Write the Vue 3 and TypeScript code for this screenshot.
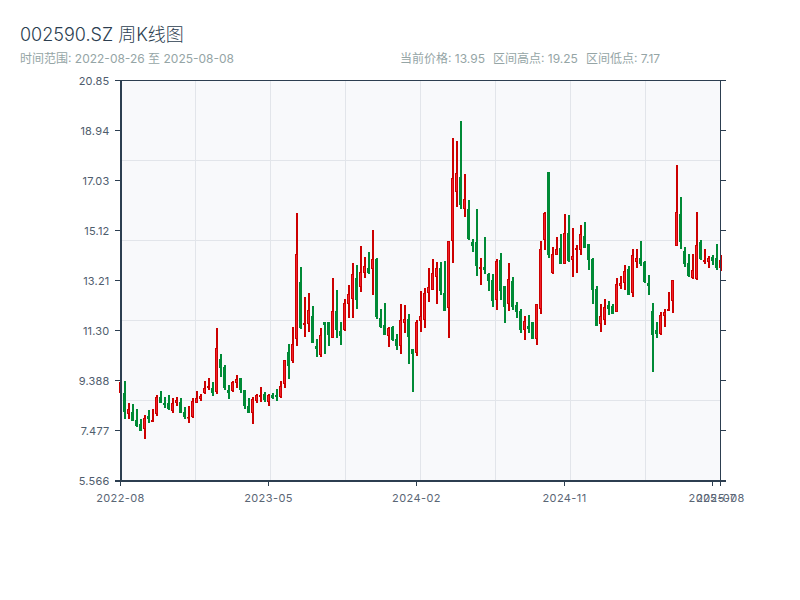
<script setup lang="ts">
type Row = [number, number, number, number, number]

// Each row: wick top, wick bottom, body top, body bottom (read at 3x scale), 1 = rising
const partA: Row[] = [
  [185,218,185,218,1],[183,296,220,276,0],[250,298,268,282,1],[252,303,276,303,0],[267,320,300,318,0],
  [297,332,312,332,0],[285,357,295,328,1],[270,308,288,298,0],[267,305,300,305,1],[226,288,232,283,1],
  [213,249,232,249,0],[232,263,248,255,0],[226,270,250,268,0],[235,279,250,272,1],[232,258,240,248,1],
  [235,278,247,278,0],[262,298,275,290,0],[258,308,290,293,1],[235,294,243,291,1],[213,249,235,248,1],
  [223,243,229,236,1],[184,222,205,220,1],[175,210,198,203,1],[186,228,205,218,0],[24,222,85,216,1],
  [102,170,118,144,0],[135,210,142,205,0],[195,236,210,218,0],[184,215,186,213,1],[166,205,176,190,1],
  [175,218,175,210,0],[210,266,210,258,0],[235,278,259,278,0],[232,311,238,278,1],[223,249,225,242,1],
  [202,246,224,230,1],[216,246,222,240,0],[223,258,225,245,1]
]
const partB: Row[] = [
  [580,598,585,595,0],[567,602,585,592,0],[543,594,558,591,1],[480,563,480,553,1],[432,537,457,497,0],
  [381,488,432,483,1],[40,437,163,416,1],[201,387,246,385,0],[291,410,370,375,1],[279,395,331,373,1],
  [318,429,349,428,0],[417,470,438,447,0],[384,470,405,464,1],[366,462,366,375,0],[366,438,366,405,0],
  [234,413,333,413,1],[270,414,333,390,0],[366,435,393,408,0],[297,393,309,391,1],[255,354,282,311,1],
  [189,354,222,296,1],[195,327,234,300,0],[138,276,216,261,1],[171,234,198,218,1],[156,222,204,218,0],
  [90,285,177,207,1],[174,357,177,351,0],[327,384,354,382,0],[309,405,375,405,0],[381,441,384,408,1],
  [378,423,380,420,0],[402,450,417,438,0],[312,462,360,437,1],[315,399,357,369,1],[342,492,357,411,0],
  [447,576,447,462,0],[360,468,366,458,1],[273,396,348,363,1],[264,384,279,360,1],[204,306,261,279,1]
]
const partC: Row[] = [
  [448,540,490,540,1],[456,582,475,500,1],[456,554,475,542,0],[453,602,549,602,0],[394,684,394,595,1],
  [84,458,205,394,1],[93,290,190,245,1],[33,297,202,285,0],[192,320,268,298,1],[270,391,297,388,0],
  [387,426,396,408,0],[297,498,396,468,0],[444,525,471,477,1],[381,492,471,480,0],[489,543,492,513,0],
  [492,591,510,573,0],[447,600,453,570,1],[429,570,450,543,0],[528,639,528,591,0],[459,603,507,582,1],
  [501,600,513,591,0],[576,624,585,606,0],[597,669,603,660,0],[618,690,633,660,1],[615,669,648,657,0],
  [636,687,636,687,0],[582,705,582,687,1],[393,612,417,597,1],[306,420,309,390,1],[186,444,186,435,0],
  [411,492,432,489,1],[381,435,417,435,1],[372,462,414,462,0],[312,462,369,461,1],[315,456,369,453,0]
]
const partD: Row[] = [
  [234,381,318,330,1],[285,369,294,300,1],[225,315,252,300,1],[216,294,258,294,0],[282,360,282,330,0],
  [324,462,327,420,0],[408,528,417,528,0],[462,546,498,522,1],[447,525,471,510,1],[453,495,465,477,0],
  [462,492,468,492,0],[384,486,402,486,1],[378,417,399,408,1],[345,420,363,399,1],[348,435,357,435,0],
  [297,441,315,429,1],[297,354,324,336,1],[273,348,324,342,0],[333,399,336,396,0],[375,435,399,408,0],
  [459,666,483,555,0],[516,564,540,552,0],[486,555,495,552,1],[477,531,486,498,1],[426,483,477,483,1],
  [390,489,390,453,1],[45,288,186,288,1],[141,297,192,276,0],[291,351,303,342,0],[312,381,339,378,0],
  [312,387,360,384,1],[186,390,285,387,1],[270,330,276,327,0],[297,342,330,336,1],[318,354,324,336,1],
  [315,345,321,333,0],[282,360,324,354,0],[315,363,330,354,1]
]

interface Candle {
  key: number
  left: number
  top: number
  wick: number
  bodyTop: number
  body: number
  up: boolean
}

const candles: Candle[] = []
const add = (rows: Row[], firstIndex: number, originY: number) => {
  rows.forEach((r, n) => {
    const y = r.map((v) => originY + v / 3)
    candles.push({
      key: firstIndex + n,
      left: 120 + 4 * (firstIndex + n),
      top: Math.round(y[0]),
      wick: Math.round(y[1]) - Math.round(y[0]),
      bodyTop: Math.round(y[2]),
      body: Math.max(Math.round(y[3]) - Math.round(y[2]), 1),
      up: r[4] === 1,
    })
  })
}
add(partA, 0, 320)
add(partB, 38, 200)
add(partC, 78, 110)
add(partD, 113, 150)

const vGrid = [195, 270, 345, 420, 495, 570, 645]
const hGrid = [160, 240, 320, 400]
const yLabels = ['20.85', '18.94', '17.03', '15.12', '13.21', '11.30', '9.388', '7.477', '5.566']
const xLabels: [number, string][] = [
  [120, '2022-08'],
  [268, '2023-05'],
  [416, '2024-02'],
  [564, '2024-11'],
  [712, '2025-07'],
  [720, '2025-08'],
]
</script>

<template>
  <div class="page">
    <header class="head">
      <h1 class="title">002590.SZ 周K线图</h1>
      <div class="meta">
        <span class="range">时间范围: 2022-08-26 至 2025-08-08</span>
        <span class="stats">
          <span>当前价格: 13.95</span>
          <span>区间高点: 19.25</span>
          <span>区间低点: 7.17</span>
        </span>
      </div>
    </header>
    <svg class="chart" width="800" height="530" viewBox="0 70 800 530">
      <rect x="121" y="81" width="599" height="400" class="plot" />
      <line v-for="x in vGrid" :key="'v' + x" :x1="x + 0.5" :x2="x + 0.5" y1="81" y2="480" class="grid" />
      <line v-for="y in hGrid" :key="'h' + y" x1="121" x2="720" :y1="y + 0.5" :y2="y + 0.5" class="grid" />

      <g v-for="c in candles" :key="c.key">
        <rect :x="c.left" :y="c.top" width="2" :height="c.wick" :class="c.up ? 'wick-up' : 'wick-down'" />
        <rect
          :x="c.left - 0.5"
          :y="c.bodyTop + 0.5"
          width="2"
          :height="Math.max(c.body - 1, 0.5)"
          :class="c.up ? 'body-up' : 'body-down'"
        />
      </g>

      <rect x="120" y="80" width="2" height="401" class="axis-fill" />
      <rect x="720" y="80" width="1" height="401" class="axis-fill" />
      <rect x="115" y="80" width="611" height="1" class="axis-fill" />
      <rect x="115" y="480" width="611" height="2" class="axis-fill" />

      <g v-for="(label, i) in yLabels" :key="label">
        <rect x="115" :y="80 + i * 50" width="5" height="1" class="axis-fill" />
        <rect x="721" :y="80 + i * 50" width="5" height="1" class="axis-fill" />
        <text x="109.5" :y="85 + i * 50" class="y-label">{{ label }}</text>
      </g>
      <g v-for="t in xLabels" :key="t[1]">
        <rect :x="t[0]" y="482" width="1" height="4" class="axis-fill" />
        <text :x="t[0] + 0.5" y="502" class="x-label">{{ t[1] }}</text>
      </g>
    </svg>
  </div>
</template>

<style scoped>
.page {
  width: 800px;
  height: 600px;
  background: #ffffff;
  font-family: Inter, "Noto Sans CJK SC", sans-serif;
  overflow: hidden;
}
.head {
  padding: 23px 20px 4px;
  height: 43px;
}
.title {
  margin: 0 0 4px;
  font-size: 18px;
  line-height: 24px;
  font-weight: 300;
  color: #2c3e50;
}
.meta {
  display: flex;
  font-size: 12px;
  line-height: 16px;
  color: #95a5a6;
}
.range {
  width: 380px;
}
.stats {
  display: flex;
  gap: 8px;
}
.chart {
  display: block;
}
.plot {
  fill: #f8f9fb;
}
.grid {
  stroke: #e2e5ea;
  stroke-width: 1;
}
.wick-up {
  fill: #cc0000;
}
.wick-down {
  fill: #008a36;
}
.body-up {
  fill: #f0202a;
  stroke: #cc0000;
  stroke-width: 1;
}
.body-down {
  fill: #008a36;
  stroke: #008a36;
  stroke-width: 1;
}
.axis-fill {
  fill: #2c3e50;
}
.y-label {
  font-size: 11px;
  letter-spacing: 0.2px;
  fill: #4f5d6d;
  text-anchor: end;
}
.x-label {
  font-size: 11px;
  letter-spacing: 0.4px;
  fill: #5a6675;
  text-anchor: middle;
}
</style>
